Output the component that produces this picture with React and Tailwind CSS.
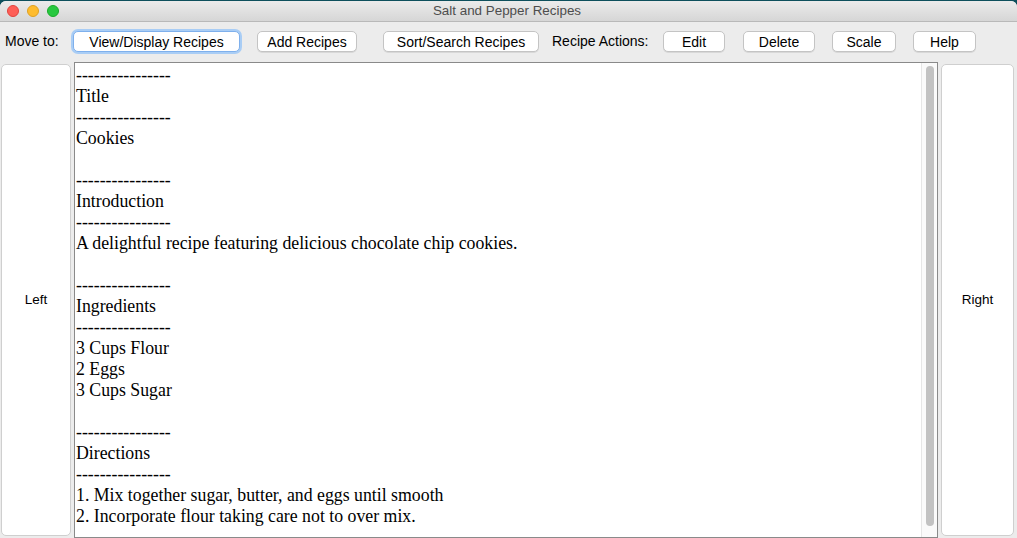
import React from 'react'

function Btn({ children, className = '', focused = false }) {
  return (
    <button
      className={
        'h-[21px] rounded-[5px] bg-white text-[14px] text-black leading-none flex items-center justify-center ' +
        (focused
          ? 'border border-[#7fb0ec] shadow-[0_0_0_2px_#a9cdf5] '
          : 'border border-[#c4c4c4] shadow-[0_1px_0_#d8d8d8] ') +
        className
      }
    >
      {children}
    </button>
  )
}

export default function App() {
  const lines = [
    '----------------',
    'Title',
    '----------------',
    'Cookies',
    '',
    '----------------',
    'Introduction',
    '----------------',
    'A delightful recipe featuring delicious chocolate chip cookies.',
    '',
    '----------------',
    'Ingredients',
    '----------------',
    '3 Cups Flour',
    '2 Eggs',
    '3 Cups Sugar',
    '',
    '----------------',
    'Directions',
    '----------------',
    '1. Mix together sugar, butter, and eggs until smooth',
    '2. Incorporate flour taking care not to over mix.',
  ]

  return (
    <div
      className="w-[1017px] h-[538px] bg-[#0d4f5c] overflow-hidden"
      style={{ fontFamily: '"Liberation Sans", Arial, sans-serif' }}
    >
      <div className="mt-[1px] h-[537px] rounded-t-[6px] bg-[#ececec] flex flex-col overflow-hidden">
        {/* title bar */}
        <div className="h-[21px] shrink-0 flex items-center bg-gradient-to-b from-[#ebebeb] to-[#d6d6d6] border-b border-[#b9b9b9]">
          <div className="flex items-center gap-[8px] pl-[7px]">
            <span className="w-[12px] h-[12px] rounded-full bg-[#fe5f57] border border-[#e0443e]" />
            <span className="w-[12px] h-[12px] rounded-full bg-[#febc2e] border border-[#dea123]" />
            <span className="w-[12px] h-[12px] rounded-full bg-[#28c840] border border-[#1aab29]" />
          </div>
          <div className="flex-1 text-center text-[13.4px] text-[#4d4d4d] pr-[62px]">Salt and Pepper Recipes</div>
        </div>

        {/* toolbar */}
        <div className="h-[40px] shrink-0 flex items-center text-[14px] text-black pb-[1px]">
          <span className="ml-[5px] w-[68px] whitespace-nowrap">Move to:</span>
          <Btn focused className="w-[167px]">View/Display Recipes</Btn>
          <Btn className="ml-[17px] w-[100px]">Add Recipes</Btn>
          <Btn className="ml-[26px] w-[156px]">Sort/Search Recipes</Btn>
          <span className="ml-[13px] w-[111px] whitespace-nowrap">Recipe Actions:</span>
          <Btn className="w-[62px]">Edit</Btn>
          <Btn className="ml-[18px] w-[72px]">Delete</Btn>
          <Btn className="ml-[17px] w-[64px]">Scale</Btn>
          <Btn className="ml-[17px] w-[63px]">Help</Btn>
        </div>

        {/* body */}
        <div className="flex-1 flex min-h-0">
          <div className="ml-[1px] mt-[2px] mb-[2px] w-[70px] rounded-[5px] bg-white border border-[#cfcfcf] flex items-center justify-center text-[13.5px]">
            Left
          </div>
          <div className="ml-[3px] w-[864px] bg-white border border-[#8a8a8a] flex min-h-0">
            <div
              className="flex-1 pl-[1px] pt-[2px] text-[17.8px] leading-[21px] text-black"
              style={{ fontFamily: '"Liberation Serif", "Times New Roman", serif' }}
            >
              {lines.map((l, i) => (
                <div key={i} className="h-[21px] whitespace-pre">{l}</div>
              ))}
            </div>
            <div className="w-[16px] border-l border-[#e6e6e6] bg-[#fafafa] flex justify-center pt-[3px] pb-[11px]">
              <div className="w-[8px] rounded-full bg-[#c2c2c2]" />
            </div>
          </div>
          <div className="ml-[3px] mt-[2px] mb-[2px] w-[73px] rounded-[5px] bg-white border border-[#cfcfcf] flex items-center justify-center text-[13.5px]">
            Right
          </div>
        </div>
      </div>
    </div>
  )
}
